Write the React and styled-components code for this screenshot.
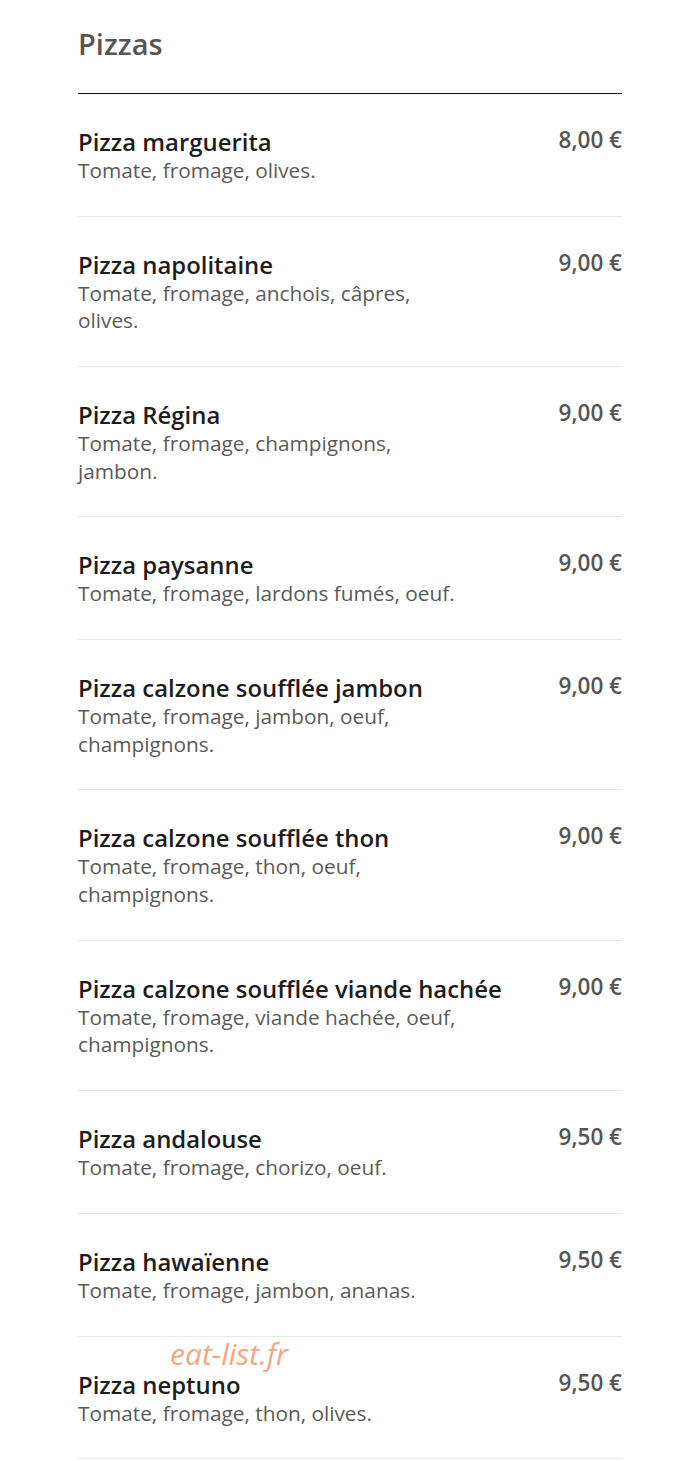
import React from 'react';
import styled, { createGlobalStyle } from 'styled-components';

const GlobalStyle = createGlobalStyle`
  html, body {
    margin: 0;
    padding: 0;
    background: #ffffff;
  }
  body {
    font-family: "Open Sans", "Noto Sans", sans-serif;
  }
`;

const pizzas = [
    { name: 'Pizza marguerita', desc: 'Tomate, fromage, olives.', price: '8,00 €' },
    { name: 'Pizza napolitaine', desc: 'Tomate, fromage, anchois, câpres, olives.', price: '9,00 €' },
    { name: 'Pizza Régina', desc: 'Tomate, fromage, champignons, jambon.', price: '9,00 €' },
    { name: 'Pizza paysanne', desc: 'Tomate, fromage, lardons fumés, oeuf.', price: '9,00 €' },
    { name: 'Pizza calzone soufflée jambon', desc: 'Tomate, fromage, jambon, oeuf, champignons.', price: '9,00 €' },
    { name: 'Pizza calzone soufflée thon', desc: 'Tomate, fromage, thon, oeuf, champignons.', price: '9,00 €' },
    { name: 'Pizza calzone soufflée viande hachée', desc: 'Tomate, fromage, viande hachée, oeuf, champignons.', price: '9,00 €' },
    { name: 'Pizza andalouse', desc: 'Tomate, fromage, chorizo, oeuf.', price: '9,50 €' },
    { name: 'Pizza hawaïenne', desc: 'Tomate, fromage, jambon, ananas.', price: '9,50 €' },
    { name: 'Pizza neptuno', desc: 'Tomate, fromage, thon, olives.', price: '9,50 €' },
];

// Menu item row
const MenuItem = ({ item }) => (
    <Row>
        <Info>
            <Name>{item.name}</Name>
            <Desc>{item.desc}</Desc>
        </Info>
        <Price>{item.price}</Price>
    </Row>
);

function App() {
    return (
        <Page>
            <GlobalStyle />
            <Section>
                <Title>Pizzas</Title>
                <List>
                    {pizzas.map((p, i) => (
                        <MenuItem key={i} item={p} />
                    ))}
                </List>
                <Watermark>eat-list.fr</Watermark>
            </Section>
        </Page>
    );
}

// Style components
const Page = styled.div`
  background: #ffffff;
  min-height: 1461px;
  padding: 24px 0 0 78px;
  box-sizing: border-box;
`;

const Section = styled.section`
  position: relative;
  width: 544px;
`;

const Title = styled.h2`
  margin: 0;
  font-size: 29px;
  line-height: 40px;
  font-weight: 600;
  color: #555555;
  padding-bottom: 29px;
  border-bottom: 1px solid #111111;
`;

const List = styled.div`
  display: flex;
  flex-direction: column;
`;

const Row = styled.div`
  display: flex;
  justify-content: space-between;
  align-items: flex-start;
  padding: 33px 0 31.3px;
  border-bottom: 1px solid #e6e6e6;
`;

const Info = styled.div`
  display: flex;
  flex-direction: column;
`;

const Name = styled.div`
  font-size: 23.9px;
  line-height: 30px;
  font-weight: 600;
  color: #1d1d1d;
  white-space: nowrap;
`;

const Desc = styled.div`
  max-width: 396px;
  font-size: 20.8px;
  line-height: 27.5px;
  color: #5a5a5a;
`;

const Price = styled.div`
  text-align: right;
  font-size: 22.5px;
  line-height: 26px;
  font-weight: 600;
  color: #555555;
  white-space: nowrap;
`;

const Watermark = styled.div`
  position: absolute;
  left: 92px;
  top: 1309px;
  font-size: 30px;
  font-style: italic;
  color: #f4a684;
  pointer-events: none;
`;

export default App;
